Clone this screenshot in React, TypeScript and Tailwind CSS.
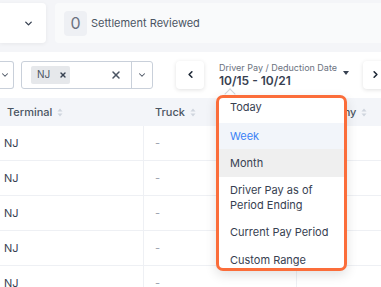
import { ChevronDown, ChevronLeft, ChevronRight, X } from "lucide-react";

function SortIcon() {
  return (
    <svg width="6" height="9" viewBox="0 0 6 9" className="ml-[5px] shrink-0">
      <path d="M3 0.5 L5.5 3.5 H0.5 Z" fill="#cfd5de" />
      <path d="M3 8.5 L5.5 5.5 H0.5 Z" fill="#cfd5de" />
    </svg>
  );
}

const rows = [0, 1, 2, 3, 4];

const options = [
  { label: "Today", cls: "h-[25px] pb-[6px] text-[#374151]" },
  { label: "Week", cls: "h-[26px] bg-[#f2f5fa] text-[#3b82f6]" },
  { label: "Month", cls: "h-[28px] bg-[#efefef] text-[#374151]" },
  { label: "Driver Pay as of Period Ending", cls: "h-[41px] text-[#374151] leading-[15px]" },
  { label: "Current Pay Period", cls: "h-[28px] text-[#374151]" },
  { label: "Custom Range", cls: "h-[28px] text-[#374151]" },
];

export default function App() {
  return (
    <div
      className="relative w-[381px] h-[287px] overflow-hidden bg-white"
      style={{ fontFamily: "Inter, 'Liberation Sans', sans-serif" }}
    >
      {/* Top summary strip */}
      <div className="h-[52px] bg-[#f4f5f8] pt-[3px] flex gap-[9px]">
        <div className="w-[46px] shrink-0 h-[40px] bg-white rounded-r-[4px] shadow-[0_1px_4px_rgba(0,0,0,0.06)] flex items-center justify-end pr-[12px]">
          <ChevronDown size={11} strokeWidth={3} className="text-[#374151]" />
        </div>
        <div className="flex-1 h-[40px] bg-[#f9fafb] rounded-l-[4px] flex items-center pl-[9px]">
          <div className="w-[23px] h-[25px] bg-[#eef0f4] rounded-[4px] flex items-center justify-center text-[16px] text-[#6b7280]">
            0
          </div>
          <span className="ml-[4px] text-[11px] text-[#4b5563]">Settlement Reviewed</span>
        </div>
      </div>

      {/* Filters */}
      <div className="h-[46px] flex items-center pb-[1px]">
        <div className="w-[14px] shrink-0 h-[28px] border-y border-r border-[#c9d0da] rounded-r-[3px] flex items-center justify-end pr-[3px]">
          <ChevronDown size={10} strokeWidth={2.5} className="text-[#4b5563]" />
        </div>
        <div className="ml-[7px] w-[132px] shrink-0 h-[28px] border border-[#c9d0da] rounded-[3px] flex items-center">
          <div className="ml-[9px] w-[39px] h-[18px] bg-[#e6e8eb] rounded-[2px] flex items-center pl-[6px] text-[10px] text-[#4b5563]">
            NJ
            <X size={8} strokeWidth={4} className="ml-[9px] text-[#374151]" />
          </div>
          <div className="flex-1 flex justify-end pr-[9px]">
            <X size={12} strokeWidth={3} className="text-[#4b5563]" />
          </div>
          <div className="w-[21px] h-full border-l border-[#c9d0da] flex items-center justify-center">
            <ChevronDown size={10} strokeWidth={2.5} className="text-[#4b5563]" />
          </div>
        </div>
        <div className="ml-[23px] w-[28px] shrink-0 h-[28px] bg-white rounded-[4px] shadow-[0_1px_4px_rgba(0,0,0,0.12)] flex items-center justify-center">
          <ChevronLeft size={11} strokeWidth={3.5} className="text-[#1f2937]" />
        </div>
        <div className="ml-[15px] w-[135px] shrink-0 flex items-center">
          <div className="flex flex-col whitespace-nowrap">
            <span className="text-[9px] leading-[11px] text-[#6b7280]">Driver Pay / Deduction Date</span>
            <span className="text-[12px] leading-[15px] font-semibold text-[#374151]">10/15 - 10/21</span>
          </div>
          <svg width="6" height="4" viewBox="0 0 6 4" className="ml-[6px] mb-[4px] shrink-0">
            <path d="M0 0 H6 L3 4 Z" fill="#374151" />
          </svg>
        </div>
        <div className="ml-[9px] w-[28px] shrink-0 h-[28px] bg-white rounded-[4px] shadow-[0_1px_4px_rgba(0,0,0,0.12)] flex items-center justify-start pl-[7px]">
          <ChevronRight size={11} strokeWidth={3.5} className="text-[#1f2937]" />
        </div>
      </div>

      {/* Table */}
      <div className="h-[28px] bg-[#f3f5f9] flex items-center text-[11px] font-medium text-[#4b5563]">
        <div className="w-[144px] shrink-0 pl-[7px] flex items-center">
          Terminal
          <SortIcon />
        </div>
        <div className="w-[153px] shrink-0 pl-[11px] flex items-center">
          Truck
          <SortIcon />
        </div>
        <div className="flex-1 pl-[9px] flex items-center">
          Company
          <SortIcon />
        </div>
      </div>
      {rows.map((r) => (
        <div key={r} className="h-[35px] shrink-0 border-b border-[#eef0f4] flex text-[11px] text-[#374151]">
          <div className="w-[144px] shrink-0 border-r border-[#eef0f4] pl-[4px] flex items-center">NJ</div>
          <div className="w-[153px] shrink-0 border-r border-[#eef0f4] pl-[11px] flex items-center text-[#9ca3af]">-</div>
          <div className="flex-1" />
        </div>
      ))}

      {/* Date range menu */}
      <div className="absolute left-[226px] top-[90px] w-[8px] h-[8px] bg-white border-l border-t border-[#d1d5db] rotate-45" />
      <div className="absolute left-[216px] top-[95px] w-[131px] h-[176px] bg-white border-[3px] border-[#fb6d3a] rounded-[7px] overflow-hidden shadow-[0_4px_12px_rgba(0,0,0,0.12)] flex flex-col text-[11px]">
        {options.map((o) => (
          <div key={o.label} className={`shrink-0 flex items-center pl-[11px] pr-[8px] ${o.cls}`}>
            {o.label}
          </div>
        ))}
      </div>
    </div>
  );
}
